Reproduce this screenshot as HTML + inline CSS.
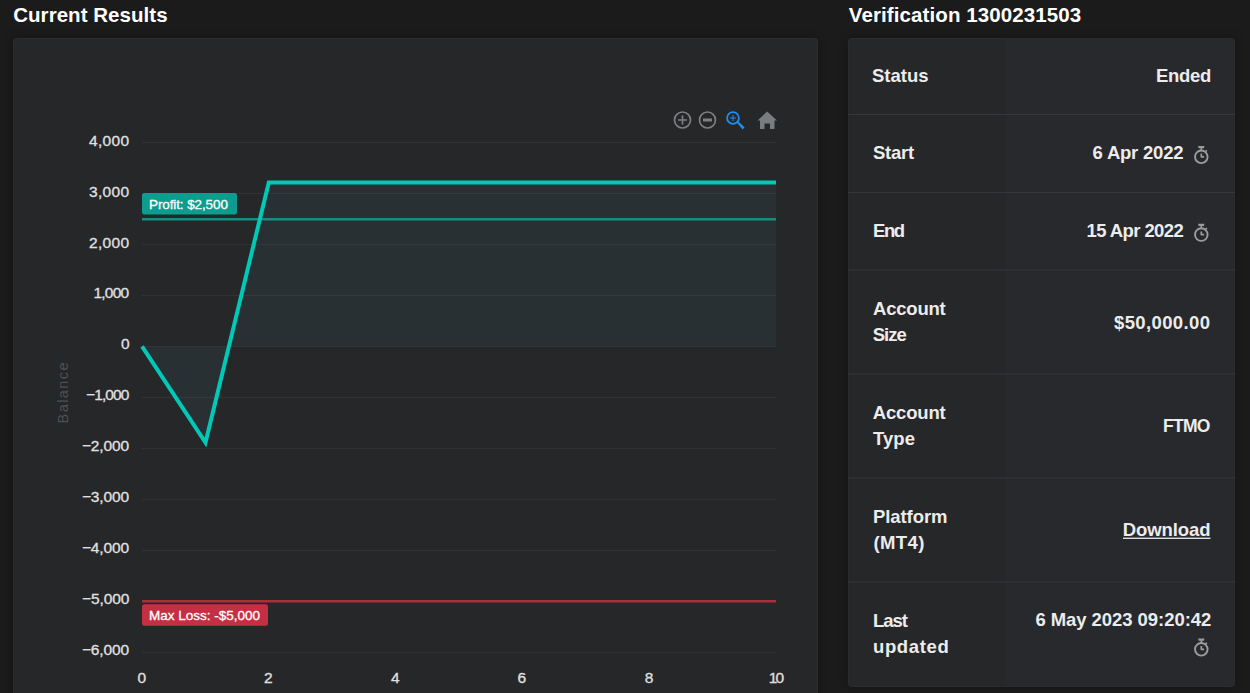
<!DOCTYPE html>
<html><head><meta charset="utf-8">
<style>
*{margin:0;padding:0;box-sizing:border-box}
html,body{width:1250px;height:693px;overflow:hidden;background:#1b1b1c;font-family:"Liberation Sans",sans-serif}
.card{position:absolute;background:#262729;border-radius:4px;box-shadow:0 0 10px rgba(0,0,0,0.25);border:1px solid rgba(255,255,255,0.025)}
</style></head><body>
<div class="card" style="left:13px;top:38px;width:805px;height:700px"></div>
<div class="card" style="left:848px;top:38px;width:387px;height:649px"></div>
<svg width="1250" height="693" style="position:absolute;left:0;top:0" font-family="Liberation Sans">
<path d="M1005 39H1231a3 3 0 0 1 3 3V683a3 3 0 0 1 -3 3H1005Z" fill="#28292c"/>
<rect x="848" y="114" width="387" height="1" fill="#34373b"/><rect x="848" y="192" width="387" height="1" fill="#34373b"/><rect x="848" y="269.5" width="387" height="1" fill="#34373b"/><rect x="848" y="373.5" width="387" height="1" fill="#34373b"/><rect x="848" y="477.5" width="387" height="1" fill="#34373b"/><rect x="848" y="581.5" width="387" height="1" fill="#34373b"/>
<polygon points="142,346.4 205.5,442.5 228.90,346.4" fill="#283033"/>
<polygon points="228.90,346.4 268.8,182.5 776,182.5 776,346.4" fill="#283033"/>
<g stroke="#ffffff" stroke-opacity="0.05" stroke-width="1"><line x1="142" x2="776" y1="142.5" y2="142.5"/><line x1="142" x2="776" y1="193.5" y2="193.5"/><line x1="142" x2="776" y1="244.5" y2="244.5"/><line x1="142" x2="776" y1="295.5" y2="295.5"/><line x1="142" x2="776" y1="346.5" y2="346.5"/><line x1="142" x2="776" y1="397.5" y2="397.5"/><line x1="142" x2="776" y1="448.5" y2="448.5"/><line x1="142" x2="776" y1="499.5" y2="499.5"/><line x1="142" x2="776" y1="550.5" y2="550.5"/><line x1="142" x2="776" y1="601.5" y2="601.5"/><line x1="142" x2="776" y1="652.5" y2="652.5"/></g>
<line x1="142" x2="776" y1="219.3" y2="219.3" stroke="#168b7f" stroke-width="2.5"/>
<line x1="142" x2="776" y1="601.25" y2="601.25" stroke="#a82f3c" stroke-width="2.6"/>
<polyline points="142,346.4 205.5,442.5 268.8,182.5 776,182.5" fill="none" stroke="#00c9b7" stroke-width="4" stroke-linejoin="miter"/>
<rect x="142" y="193" width="95" height="21.4" rx="2.5" fill="#0d9c8d"/>
<rect x="142" y="604.3" width="126" height="21.4" rx="2.5" fill="#c52f44"/>
<text transform="translate(68.2,392.9) rotate(-90)" text-anchor="middle" fill="#4e5154" font-size="14.5" textLength="61" lengthAdjust="spacing">Balance</text>
<g fill="none" stroke="#7d8083" stroke-width="1.7">
<circle cx="682.5" cy="120" r="8"/><path d="M678 120h9M682.5 115.5v9"/>
<circle cx="707.5" cy="120" r="8"/><path d="M703 120h9" stroke-width="3"/>
</g>
<g fill="none" stroke="#1e8ff0" stroke-width="2">
<circle cx="733" cy="118" r="5.9" stroke-width="1.8"/><path d="M729.8 118h6.4M733 114.8v6.4" stroke-width="1.0"/></g><path d="M736.8 122.6L738.1 121.3L744.6 127.2L742.6 129.6Z" fill="#1e8ff0"/><g>
</g>
<path d="M767.2 111.5 L757.5 120.5 L760 120.5 L760 129 L764.5 129 L764.5 123.5 L770 123.5 L770 129 L774.5 129 L774.5 120.5 L777 120.5 Z" fill="#7a7d80"/>
<g fill="none" stroke="#9c9c9c" stroke-width="1.9"><circle cx="1201.3" cy="156.8" r="6.3"/><path d="M1201.3 157.20000000000002V153.60000000000002M1200.8999999999999 156.8h3.2" stroke-width="1.7"/></g><path d="M1198.1 146.0h6.4l-0.6 2.2h-1.8v2.2h-1.6v-2.2h-1.8Z" fill="#9c9c9c"/><path d="M1205.6 151.60000000000002l1.3 -1.3" stroke="#9c9c9c" stroke-width="1.5"/><g fill="none" stroke="#9c9c9c" stroke-width="1.9"><circle cx="1201.3" cy="234.6" r="6.3"/><path d="M1201.3 235.0V231.4M1200.8999999999999 234.6h3.2" stroke-width="1.7"/></g><path d="M1198.1 223.79999999999998h6.4l-0.6 2.2h-1.8v2.2h-1.6v-2.2h-1.8Z" fill="#9c9c9c"/><path d="M1205.6 229.4l1.3 -1.3" stroke="#9c9c9c" stroke-width="1.5"/><g fill="none" stroke="#9c9c9c" stroke-width="1.9"><circle cx="1201.3" cy="649.3" r="6.3"/><path d="M1201.3 649.6999999999999V646.0999999999999M1200.8999999999999 649.3h3.2" stroke-width="1.7"/></g><path d="M1198.1 638.5h6.4l-0.6 2.2h-1.8v2.2h-1.6v-2.2h-1.8Z" fill="#9c9c9c"/><path d="M1205.6 644.0999999999999l1.3 -1.3" stroke="#9c9c9c" stroke-width="1.5"/>
<rect x="1123" y="537.6" width="87.5" height="1.3" fill="#ececec"/>
<text x="13.20" y="22.00" font-size="20.5" font-weight="bold" fill="#fff" textLength="154.37" lengthAdjust="spacing">Current Results</text><text x="848.80" y="22.00" font-size="20.5" font-weight="bold" fill="#fff" textLength="232.40" lengthAdjust="spacing">Verification 1300231503</text><text x="871.90" y="82.00" font-size="18.5" font-weight="bold" fill="#ececec" textLength="56.73" lengthAdjust="spacing">Status</text><text x="1155.90" y="82.00" font-size="18.5" font-weight="bold" fill="#ececec" textLength="55.33" lengthAdjust="spacing">Ended</text><text x="873.00" y="159.00" font-size="18.5" font-weight="bold" fill="#ececec" textLength="41.15" lengthAdjust="spacing">Start</text><text x="1092.60" y="158.70" font-size="18.5" font-weight="bold" fill="#ececec" textLength="90.89" lengthAdjust="spacing">6 Apr 2022</text><text x="873.00" y="236.50" font-size="18.5" font-weight="bold" fill="#ececec" textLength="32.14" lengthAdjust="spacing">End</text><text x="1086.60" y="236.50" font-size="18.5" font-weight="bold" fill="#ececec" textLength="97.18" lengthAdjust="spacing">15 Apr 2022</text><text x="873.00" y="315.00" font-size="18.5" font-weight="bold" fill="#ececec" textLength="72.79" lengthAdjust="spacing">Account</text><text x="872.70" y="341.00" font-size="18.5" font-weight="bold" fill="#ececec" textLength="34.02" lengthAdjust="spacing">Size</text><text x="1114.00" y="328.50" font-size="18.5" font-weight="bold" fill="#ececec" textLength="95.98" lengthAdjust="spacing">$50,000.00</text><text x="872.80" y="418.70" font-size="18.5" font-weight="bold" fill="#ececec" textLength="72.99" lengthAdjust="spacing">Account</text><text x="873.00" y="444.90" font-size="18.5" font-weight="bold" fill="#ececec" textLength="42.00" lengthAdjust="spacing">Type</text><text x="1163.00" y="431.80" font-size="17.5" font-weight="bold" fill="#ececec" textLength="47.40" lengthAdjust="spacing">FTMO</text><text x="873.00" y="522.60" font-size="18.5" font-weight="bold" fill="#ececec" textLength="74.44" lengthAdjust="spacing">Platform</text><text x="873.40" y="548.50" font-size="18.5" font-weight="bold" fill="#ececec" textLength="50.92" lengthAdjust="spacing">(MT4)</text><text x="1122.70" y="536.20" font-size="18.5" font-weight="bold" fill="#ececec" textLength="87.78" lengthAdjust="spacing">Download</text><text x="873.00" y="626.60" font-size="18.5" font-weight="bold" fill="#ececec" textLength="35.03" lengthAdjust="spacing">Last</text><text x="873.00" y="652.50" font-size="18.5" font-weight="bold" fill="#ececec" textLength="75.73" lengthAdjust="spacing">updated</text><text x="1035.40" y="626.40" font-size="18.5" font-weight="bold" fill="#ececec" textLength="175.89" lengthAdjust="spacing">6 May 2023 09:20:42</text><text x="89.00" y="145.60" font-size="15.5" font-weight="normal" fill="#e0e0e0" stroke="#e0e0e0" stroke-width="0.3" textLength="40.03" lengthAdjust="spacing">4,000</text><text x="89.00" y="196.56" font-size="15.5" font-weight="normal" fill="#e0e0e0" stroke="#e0e0e0" stroke-width="0.3" textLength="40.03" lengthAdjust="spacing">3,000</text><text x="89.00" y="247.52" font-size="15.5" font-weight="normal" fill="#e0e0e0" stroke="#e0e0e0" stroke-width="0.3" textLength="40.03" lengthAdjust="spacing">2,000</text><text x="93.40" y="298.48" font-size="15.5" font-weight="normal" fill="#e0e0e0" stroke="#e0e0e0" stroke-width="0.3" textLength="35.83" lengthAdjust="spacing">1,000</text><text x="121.00" y="349.44" font-size="15.5" font-weight="normal" fill="#e0e0e0" stroke="#e0e0e0" stroke-width="0.3" textLength="0.90" lengthAdjust="spacing">0</text><text x="86.00" y="400.40" font-size="15.5" font-weight="normal" fill="#e0e0e0" stroke="#e0e0e0" stroke-width="0.3" textLength="43.38" lengthAdjust="spacing">−1,000</text><text x="81.90" y="451.36" font-size="15.5" font-weight="normal" fill="#e0e0e0" stroke="#e0e0e0" stroke-width="0.3" textLength="47.18" lengthAdjust="spacing">−2,000</text><text x="81.90" y="502.32" font-size="15.5" font-weight="normal" fill="#e0e0e0" stroke="#e0e0e0" stroke-width="0.3" textLength="47.18" lengthAdjust="spacing">−3,000</text><text x="81.90" y="553.28" font-size="15.5" font-weight="normal" fill="#e0e0e0" stroke="#e0e0e0" stroke-width="0.3" textLength="47.18" lengthAdjust="spacing">−4,000</text><text x="82.00" y="604.24" font-size="15.5" font-weight="normal" fill="#e0e0e0" stroke="#e0e0e0" stroke-width="0.3" textLength="47.38" lengthAdjust="spacing">−5,000</text><text x="81.90" y="655.20" font-size="15.5" font-weight="normal" fill="#e0e0e0" stroke="#e0e0e0" stroke-width="0.3" textLength="47.18" lengthAdjust="spacing">−6,000</text><text x="137.60" y="683.00" font-size="15.5" font-weight="normal" fill="#e0e0e0" stroke="#e0e0e0" stroke-width="0.3" textLength="12.10" lengthAdjust="spacing">0</text><text x="264.10" y="683.00" font-size="15.5" font-weight="normal" fill="#e0e0e0" stroke="#e0e0e0" stroke-width="0.3" textLength="25.10" lengthAdjust="spacing">2</text><text x="391.00" y="683.00" font-size="15.5" font-weight="normal" fill="#e0e0e0" stroke="#e0e0e0" stroke-width="0.3" textLength="12.10" lengthAdjust="spacing">4</text><text x="517.60" y="683.00" font-size="15.5" font-weight="normal" fill="#e0e0e0" stroke="#e0e0e0" stroke-width="0.3" textLength="20.10" lengthAdjust="spacing">6</text><text x="644.75" y="683.00" font-size="15.5" font-weight="normal" fill="#e0e0e0" stroke="#e0e0e0" stroke-width="0.3" textLength="21.90" lengthAdjust="spacing">8</text><text x="768.85" y="683.00" font-size="15.5" font-weight="normal" fill="#e0e0e0" stroke="#e0e0e0" stroke-width="0.3" textLength="15.20" lengthAdjust="spacing">10</text><text x="149.00" y="208.70" font-size="13.5" font-weight="normal" fill="#fff" stroke="#fff" stroke-width="0.3" textLength="78.90" lengthAdjust="spacing">Profit: $2,500</text><text x="148.90" y="620.00" font-size="13.5" font-weight="normal" fill="#fff" stroke="#fff" stroke-width="0.3" textLength="111.05" lengthAdjust="spacing">Max Loss: -$5,000</text>
</svg>
</body></html>
